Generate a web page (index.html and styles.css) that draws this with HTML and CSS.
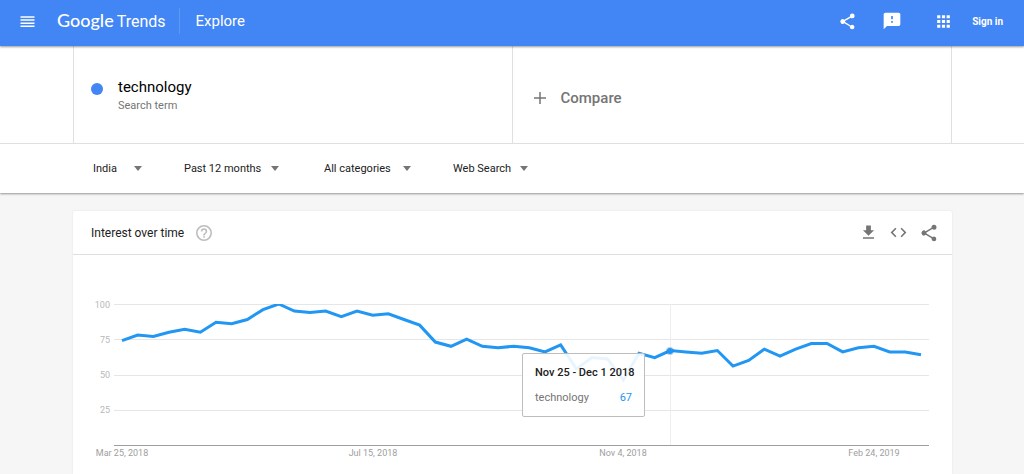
FILE: index.html
```html
<!DOCTYPE html>
<html lang="en">
<head>
<meta charset="utf-8">
<meta name="viewport" content="width=device-width, initial-scale=1">
<title>technology - Explore - Google Trends</title>
<link rel="stylesheet" href="styles.css">
</head>
<body>
<svg class="sprite" aria-hidden="true">
  <symbol id="share" viewBox="0 0 24 24"><path d="M18 16.1c-.8 0-1.400.3-2 .8l-7.100-4.200c.1-.2.1-.5.1-.7s0-.5-.1-.7L16 7.200c.5.5 1.200.8 2 .8a3 3 0 1 0-3-3c0 .2 0 .5.1.7L8 9.800A3 3 0 1 0 8 14.200l7.100 4.200c-.1.200-.1.400-.1.600a2.900 2.900 0 1 0 3-2.900z"/></symbol>
</svg>
<header class="topbar">
  <button class="icon-btn menu" aria-label="Menu"><svg width="20" height="20" viewBox="0 0 20 20"><path d="M2.500 4.200h14v1.500h-14zM2.500 7.300h14v1.500h-14zM2.500 10.500h14V12h-14zM2.500 13.600h14v1.500h-14z"/></svg></button>
  <a class="logo" href="#"><span class="logo-google">Google</span><span class="logo-trends">Trends</span></a>
  <span class="section">Explore</span>
  <nav class="actions" aria-label="Tools">
    <button class="icon-btn share" aria-label="Share"><svg width="19" height="19"><use href="#share"/></svg></button>
    <button class="icon-btn feedback" aria-label="Send feedback"><svg width="20" height="20" viewBox="0 0 24 24"><path d="M20 2H4a2 2 0 0 0-2 2v18l4-4h14a2 2 0 0 0 2-2V4a2 2 0 0 0-2-2zm-7 12h-2v-2h2zm0-4h-2V6h2z"/></svg></button>
    <button class="icon-btn apps" aria-label="Google apps"><svg width="19" height="19" viewBox="0 0 24 24"><path d="M4 4h4v4H4zM10 4h4v4h-4zM16 4h4v4h-4zM4 10h4v4H4zM10 10h4v4h-4zM16 10h4v4h-4zM4 16h4v4H4zM10 16h4v4h-4zM16 16h4v4h-4z"/></svg></button>
    <a class="signin" href="#">Sign in</a>
  </nav>
</header>
<section class="query">
  <div class="terms">
    <div class="term">
      <span class="dot"></span>
      <div><div class="term-name">technology</div><div class="term-type">Search term</div></div>
    </div>
    <button class="compare"><svg width="12" height="12" viewBox="0 0 12 12"><path d="M6 0v12M0 6h12"/></svg>Compare</button>
  </div>
  <form class="filters">
    <span class="filter region"><select aria-label="Region"><option>India</option></select></span>
    <span class="filter period"><select aria-label="Time range"><option>Past 12 months</option></select></span>
    <span class="filter category"><select aria-label="Category"><option>All categories</option></select></span>
    <span class="filter source"><select aria-label="Search type"><option>Web Search</option></select></span>
  </form>
</section>
<main>
  <section class="card">
    <div class="card-head">
      <h2>Interest over time</h2>
      <button class="icon-btn help" aria-label="Help"><svg width="16" height="16" viewBox="2 2 20 20"><path d="M11 18h2v-2h-2zm1-16a10 10 0 1 0 0 20 10 10 0 0 0 0-20zm0 18a8 8 0 1 1 0-16 8 8 0 0 1 0 16zm0-14a4 4 0 0 0-4 4h2a2 2 0 1 1 4 0c0 2-3 1.750-3 5h2c0-2.250 3-2.500 3-5a4 4 0 0 0-4-4z"/></svg></button>
      <div class="card-actions">
        <button class="icon-btn" aria-label="Download"><svg width="19" height="19" viewBox="0 0 24 24"><path d="M19 9h-4V3H9v6H5l7 7zM5 18v2h14v-2z"/></svg></button>
        <button class="icon-btn" aria-label="Embed"><svg width="19" height="19" viewBox="0 0 24 24"><path d="M9.400 16.600 4.800 12l4.600-4.600L8 6l-6 6 6 6zm5.200 0 4.600-4.600-4.600-4.600L16 6l6 6-6 6z"/></svg></button>
        <button class="icon-btn" aria-label="Share chart"><svg width="20" height="20"><use href="#share"/></svg></button>
      </div>
    </div>
    <div class="chart">
      <svg id="plot" viewBox="0 0 879 210" role="img" aria-label="Interest over time for technology">
        <g class="grid"><path d="M41 49.500H856M41 84.500H856M41 120.500H856M41 155.500H856"/><path class="cursor" d="M597.500 49V190"/></g>
        <path class="axis" d="M41 190.500H856"/>
        <g class="ylabels"><text x="37" y="53">100</text><text x="37" y="88">75</text><text x="37" y="123">50</text><text x="37" y="158">25</text></g>
        <g class="xlabels"><text x="49" y="201">Mar 25, 2018</text><text x="300" y="201">Jul 15, 2018</text><text x="550" y="201">Nov 4, 2018</text><text x="801" y="201">Feb 24, 2019</text></g>
        <clipPath id="area"><path d="M41 49H856V190H41z"/></clipPath>
        <polyline class="line" id="line" clip-path="url(#area)"/>
        <circle class="halo" cx="597" cy="96" r="4"/>
        <circle class="point" cx="597" cy="96" r="3"/>
      </svg>
      <div class="tooltip"><strong>Nov 25 - Dec 1 2018</strong><div class="tooltip-row"><span>technology</span><span class="value">67</span></div></div>
    </div>
  </section>
</main>
<script src="chart.js"></script>
</body>
</html>
```
FILE: styles.css
```css
* { box-sizing: border-box; }
body { margin: 0; min-height: 100vh; display: flex; flex-direction: column; background: #f6f6f6; font-family: Roboto, "Liberation Sans", sans-serif; color: #212121; }
button, select { margin: 0; padding: 0; border: 0; background: none; font: inherit; color: inherit; cursor: pointer; }
a { color: inherit; text-decoration: none; }
svg { display: block; fill: currentColor; }
.sprite { position: absolute; width: 0; height: 0; }
.icon-btn { display: flex; flex: none; }

.topbar { position: relative; z-index: 1; display: flex; align-items: center; height: 46px; padding: 0 21px 4px 18px; background: #4285f4; color: #fff; box-shadow: 0 1px 2px rgba(0, 0, 0, .4); }
.menu { padding-top: 2px; }
.logo { display: flex; align-items: baseline; gap: 3px; margin-left: 19px; padding-right: 13px; line-height: 24px; border-right: 1px solid #5d97f6; }
.logo-google { font: 500 18px/24px Lato, sans-serif; }
.logo-trends { font-size: 16px; font-weight: 400; }
.section { margin-left: 16px; font-size: 15px; }
.actions { display: flex; align-items: center; margin-left: auto; }
.feedback { margin-left: 25px; }
.apps { margin-left: 32px; }
.signin { margin-left: 19px; font-size: 10px; font-weight: 700; }

.query { position: relative; background: #fff; box-shadow: 0 1px 2px rgba(0, 0, 0, .4); }
.terms { display: grid; grid-template-columns: 1fr 1fr; height: 98px; padding: 0 72px 0 73px; border-bottom: 1px solid #e0e0e0; }
.term { display: flex; gap: 15px; padding: 30px 17px; border-left: 1px solid #e0e0e0; }
.dot { width: 12px; height: 12px; margin-top: 7px; border-radius: 50%; background: #4285f4; }
.term-name { font-size: 15px; line-height: 22px; color: #000; }
.term-type { font-size: 11px; line-height: 16px; color: #757575; }
.compare { display: flex; align-items: center; gap: 15px; margin-left: -1px; padding: 5px 21px 0; border: solid #e0e0e0; border-width: 0 1px; color: #757575; font-size: 15px; font-weight: 500; }
.compare svg { stroke: #757575; stroke-width: 1.5; }
.filters { display: flex; height: 49px; padding: 0 93px; align-items: center; }
.filter { display: flex; align-items: center; }
.filter::after { content: ""; margin-left: -8px; border: solid transparent; border-width: 5px 4px 0; border-top-color: #757575; pointer-events: none; }
.filter select { appearance: none; width: 100%; font-size: 11px; line-height: 20px; }
.region { width: 49px; margin-right: 42px; }
.period { width: 95px; margin-right: 45px; }
.category { width: 87px; margin-right: 42px; }
.source { width: 75px; }

main { display: flex; flex: 1; padding: 18px 72px 0 73px; }
.card { flex: 1; min-width: 0; background: #fff; border-radius: 2px 2px 0 0; box-shadow: 0 0 2px rgba(0, 0, 0, .1); }
.card-head { display: flex; align-items: center; height: 44px; padding: 0 13px 0 18px; border-bottom: 1px solid #e0e0e0; }
h2 { margin: 0; font-size: 12px; font-weight: 400; }
.help { margin-left: 12px; color: #bdbdbd; }
.card-actions { display: flex; align-items: center; gap: 11px; margin-left: auto; color: #757575; }
.chart { position: relative; }
.chart > svg { width: 100%; height: auto; }
.grid { stroke: #e6e6e6; }
.cursor { stroke: #eee; }
.axis { stroke: #9e9e9e; }
.ylabels { fill: #b8b8b8; font-size: 9px; text-anchor: end; }
.xlabels { fill: #9e9e9e; font-size: 9px; text-anchor: middle; }
.line { fill: none; stroke: #2196f3; stroke-width: 3; }
.halo { fill: #1565c0; opacity: .3; }
.point { fill: #2196f3; }
.tooltip { position: absolute; top: 98px; left: 449px; width: 123px; padding: 12px 12px 11px; border: 1px solid #bdbdbd; border-radius: 2px; background: rgba(255, 255, 255, .9); font-size: 11px; line-height: 14px; white-space: nowrap; }
.tooltip strong { display: block; margin-bottom: 11px; font-weight: 500; }
.tooltip-row { display: flex; justify-content: space-between; color: #757575; }
.value { color: #2196f3; }
```
FILE: chart.js
```js
const values = [
  74, 78, 77, 80, 82, 80, 87, 86, 89, 96, 100, 95, 94, 95, 91, 95, 92, 93,
  89, 85, 73, 70, 75, 70, 69, 70, 69, 66, 71, 54, 62, 61, 46, 65, 62, 67,
  66, 65, 67, 56, 60, 68, 63, 68, 72, 72, 66, 69, 70, 66, 66, 64
];
const left = 49, right = 848, base = 190, top100 = 49;
const step = (right - left) / (values.length - 1);
document.getElementById("line").setAttribute("points", values
  .map((v, i) => `${left + i * step},${base - v * (base - top100) / 100}`)
  .join(" "));
```
